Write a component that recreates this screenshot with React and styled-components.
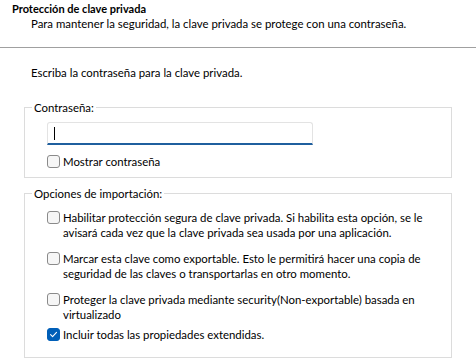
import styled, { createGlobalStyle } from "styled-components";

const GlobalStyle = createGlobalStyle`
  html, body {
    margin: 0;
    padding: 0;
    background: #ffffff;
  }
  * {
    box-sizing: border-box;
  }
`;

const options = [
  {
    id: "strong",
    text: "Habilitar protección segura de clave privada. Si habilita esta opción, se le avisará cada vez que la clave privada sea usada por una aplicación.",
    checked: false,
    gap: 11,
  },
  {
    id: "exportable",
    text: "Marcar esta clave como exportable. Esto le permitirá hacer una copia de seguridad de las claves o transportarlas en otro momento.",
    checked: false,
    gap: 11,
  },
  {
    id: "vbs",
    text: "Proteger la clave privada mediante security(Non-exportable) basada en virtualizado",
    checked: false,
    gap: 5,
  },
  {
    id: "extended",
    text: "Incluir todas las propiedades extendidas.",
    checked: true,
    gap: 0,
  },
];

const Checkbox = ({ checked }) => (
  <Box $checked={checked}>
    {checked && (
      <svg width="9" height="9" viewBox="0 0 9 9">
        <path d="M1.6 4.7 L3.6 6.6 L7.5 2.4" fill="none" stroke="#ffffff" strokeWidth="1.1" strokeLinecap="round" strokeLinejoin="round" />
      </svg>
    )}
  </Box>
);

const App = () => {
  return (
    <Page>
      <GlobalStyle />
      <Header>
        <Title>Protección de clave privada</Title>
        <Subtitle>Para mantener la seguridad, la clave privada se protege con una contraseña.</Subtitle>
      </Header>
      <Body>
        <Intro>Escriba la contraseña para la clave privada.</Intro>

        <Group $top={20} $padTop={7} $padBottom={8}>
          <Legend>Contraseña:</Legend>
          <PasswordField>
            <Caret />
          </PasswordField>
          <Option $top={9}>
            <Checkbox checked={false} />
            <OptionText>Mostrar contraseña</OptionText>
          </Option>
        </Group>

        <Group $top={8} $padTop={9} $padBottom={15}>
          <Legend>Opciones de importación:</Legend>
          {options.map((opt) => (
            <Option key={opt.id} $bottom={opt.gap}>
              <Checkbox checked={opt.checked} />
              <OptionText>{opt.text}</OptionText>
            </Option>
          ))}
        </Group>
      </Body>
    </Page>
  );
};
export default App;

const Page = styled.div`
  width: 476px;
  height: 359px;
  overflow: hidden;
  background: #ffffff;
  color: #000000;
  font-family: "Lato", "Liberation Sans", sans-serif;
  font-size: 11.4px;
`;

const Header = styled.header`
  box-sizing: content-box;
  height: 45px;
  padding: 2px 12px 0;
  border-bottom: 1px solid #a0a0a0;
`;

const Title = styled.div`
  font-weight: 700;
  font-size: 11px;
  line-height: 14px;
`;

const Subtitle = styled.div`
  padding-left: 19px;
  line-height: 15px;
`;

const Body = styled.main`
  padding: 0 24px;
`;

const Intro = styled.div`
  margin-top: 17px;
  padding-left: 7px;
  line-height: 15px;
`;

const Group = styled.fieldset`
  margin: ${(p) => p.$top}px 0 0;
  min-width: 0;
  padding: ${(p) => p.$padTop}px 22px ${(p) => p.$padBottom}px;
  border: 1px solid #dcdcdc;
  border-radius: 0;
`;

const Legend = styled.legend`
  margin-left: -15px;
  padding: 0 2px;
  line-height: 15px;
`;

const PasswordField = styled.div`
  display: flex;
  align-items: center;
  width: 266px;
  height: 23px;
  padding-left: 6px;
  background: #ffffff;
  border: 1px solid #e3e3e3;
  border-bottom: 2px solid #1f5f9e;
  border-radius: 3px 3px 0 0;
`;

const Caret = styled.span`
  display: block;
  width: 1px;
  height: 13px;
  background: #000000;
`;

const Option = styled.div`
  display: flex;
  align-items: flex-start;
  gap: 3px;
  margin-top: ${(p) => p.$top || 0}px;
  margin-bottom: ${(p) => p.$bottom || 0}px;
`;

const Box = styled.span`
  flex: none;
  display: flex;
  align-items: center;
  justify-content: center;
  width: 13px;
  height: 13px;
  margin-top: 1px;
  border-radius: 3px;
  border: 1px solid ${(p) => (p.$checked ? "#005fb8" : "#8a8a8a")};
  background: ${(p) => (p.$checked ? "#005fb8" : "#f6f6f6")};
`;

const OptionText = styled.span`
  line-height: 15px;
  max-width: 362px;
`;
